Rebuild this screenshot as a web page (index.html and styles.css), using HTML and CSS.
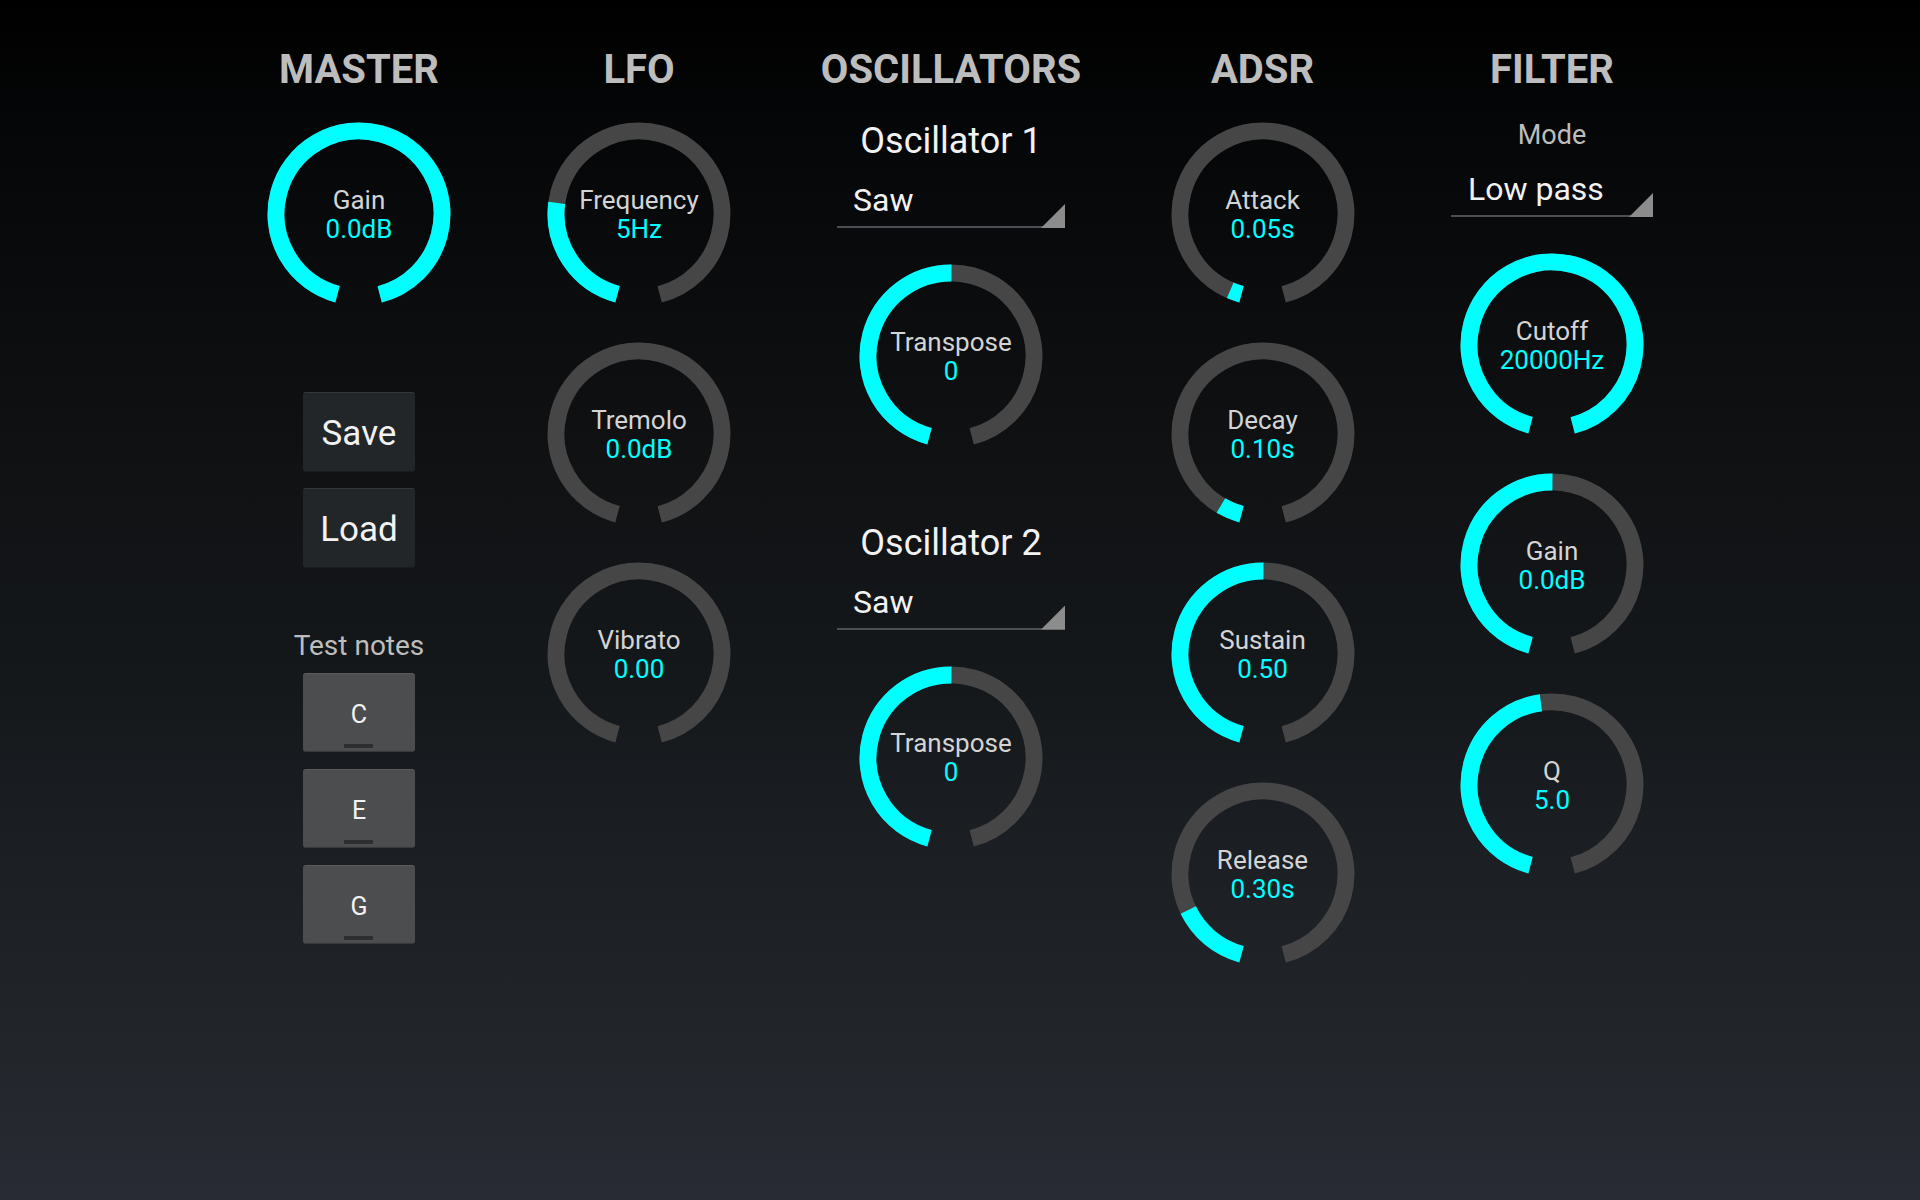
FILE: index.html
```html
<!DOCTYPE html>
<html lang="en">
<head>
<meta charset="utf-8">
<title>Synth</title>
<link rel="stylesheet" href="styles.css">
</head>
<body>
<main class="synth">
  <section class="col">
    <h2 class="title">MASTER</h2>
    <div class="knob first">
      <svg class="dial" viewBox="0 0 184 184" width="184" height="184"><circle class="track" cx="92" cy="92" r="83"/><circle class="level" cx="92" cy="92" r="83" stroke-dasharray="478.04 1000"/></svg>
      <div class="knob-text"><span class="knob-label">Gain</span><span class="knob-value">0.0dB</span></div>
    </div>
    <div class="btn-group">
      <button class="btn">Save</button>
      <button class="btn">Load</button>
    </div>
    <div class="notes-label">Test notes</div>
    <div class="notes">
      <button class="note">C</button>
      <button class="note">E</button>
      <button class="note">G</button>
    </div>
  </section>

  <section class="col">
    <h2 class="title">LFO</h2>
    <div class="knob first">
      <svg class="dial" viewBox="0 0 184 184" width="184" height="184"><circle class="track" cx="92" cy="92" r="83"/><circle class="level" cx="92" cy="92" r="83" stroke-dasharray="119.5 1000"/></svg>
      <div class="knob-text"><span class="knob-label">Frequency</span><span class="knob-value">5Hz</span></div>
    </div>
    <div class="knob">
      <svg class="dial" viewBox="0 0 184 184" width="184" height="184"><circle class="track" cx="92" cy="92" r="83"/></svg>
      <div class="knob-text"><span class="knob-label">Tremolo</span><span class="knob-value">0.0dB</span></div>
    </div>
    <div class="knob">
      <svg class="dial" viewBox="0 0 184 184" width="184" height="184"><circle class="track" cx="92" cy="92" r="83"/></svg>
      <div class="knob-text"><span class="knob-label">Vibrato</span><span class="knob-value">0.00</span></div>
    </div>
  </section>

  <section class="col">
    <h2 class="title">OSCILLATORS</h2>
    <div class="osc">
      <div class="osc-name">Oscillator 1</div>
      <div class="select osc-select">Saw</div>
      <div class="knob">
        <svg class="dial" viewBox="0 0 184 184" width="184" height="184"><circle class="track" cx="92" cy="92" r="83"/><circle class="level" cx="92" cy="92" r="83" stroke-dasharray="239.02 1000"/></svg>
        <div class="knob-text"><span class="knob-label">Transpose</span><span class="knob-value">0</span></div>
      </div>
    </div>
    <div class="osc osc-second">
      <div class="osc-name">Oscillator 2</div>
      <div class="select osc-select">Saw</div>
      <div class="knob">
        <svg class="dial" viewBox="0 0 184 184" width="184" height="184"><circle class="track" cx="92" cy="92" r="83"/><circle class="level" cx="92" cy="92" r="83" stroke-dasharray="239.02 1000"/></svg>
        <div class="knob-text"><span class="knob-label">Transpose</span><span class="knob-value">0</span></div>
      </div>
    </div>
  </section>

  <section class="col">
    <h2 class="title">ADSR</h2>
    <div class="knob first">
      <svg class="dial" viewBox="0 0 184 184" width="184" height="184"><circle class="track" cx="92" cy="92" r="83"/><circle class="level" cx="92" cy="92" r="83" stroke-dasharray="12 1000"/></svg>
      <div class="knob-text"><span class="knob-label">Attack</span><span class="knob-value">0.05s</span></div>
    </div>
    <div class="knob">
      <svg class="dial" viewBox="0 0 184 184" width="184" height="184"><circle class="track" cx="92" cy="92" r="83"/><circle class="level" cx="92" cy="92" r="83" stroke-dasharray="22.5 1000"/></svg>
      <div class="knob-text"><span class="knob-label">Decay</span><span class="knob-value">0.10s</span></div>
    </div>
    <div class="knob">
      <svg class="dial" viewBox="0 0 184 184" width="184" height="184"><circle class="track" cx="92" cy="92" r="83"/><circle class="level" cx="92" cy="92" r="83" stroke-dasharray="239.02 1000"/></svg>
      <div class="knob-text"><span class="knob-label">Sustain</span><span class="knob-value">0.50</span></div>
    </div>
    <div class="knob">
      <svg class="dial" viewBox="0 0 184 184" width="184" height="184"><circle class="track" cx="92" cy="92" r="83"/><circle class="level" cx="92" cy="92" r="83" stroke-dasharray="71.2 1000"/></svg>
      <div class="knob-text"><span class="knob-label">Release</span><span class="knob-value">0.30s</span></div>
    </div>
  </section>

  <section class="col">
    <h2 class="title">FILTER</h2>
    <div class="mode-label">Mode</div>
    <div class="select filter-select">Low pass</div>
    <div class="knob">
      <svg class="dial" viewBox="0 0 184 184" width="184" height="184"><circle class="track" cx="92" cy="92" r="83"/><circle class="level" cx="92" cy="92" r="83" stroke-dasharray="478.04 1000"/></svg>
      <div class="knob-text"><span class="knob-label">Cutoff</span><span class="knob-value">20000Hz</span></div>
    </div>
    <div class="knob">
      <svg class="dial" viewBox="0 0 184 184" width="184" height="184"><circle class="track" cx="92" cy="92" r="83"/><circle class="level" cx="92" cy="92" r="83" stroke-dasharray="239.02 1000"/></svg>
      <div class="knob-text"><span class="knob-label">Gain</span><span class="knob-value">0.0dB</span></div>
    </div>
    <div class="knob">
      <svg class="dial" viewBox="0 0 184 184" width="184" height="184"><circle class="track" cx="92" cy="92" r="83"/><circle class="level" cx="92" cy="92" r="83" stroke-dasharray="227.5 1000"/></svg>
      <div class="knob-text"><span class="knob-label">Q</span><span class="knob-value">5.0</span></div>
    </div>
  </section>
</main>
</body>
</html>
```
FILE: styles.css
```css
html, body {
  margin: 0;
  padding: 0;
}

body {
  width: 1920px;
  height: 1200px;
  overflow: hidden;
  font-family: Roboto, "Noto Sans", "Liberation Sans", sans-serif;
  background: linear-gradient(180deg,
    #000000 0%,
    #050607 10%,
    #090a0c 20%,
    #101214 40%,
    #15181b 57%,
    #1b1e22 70%,
    #202327 83%,
    #24272d 92%,
    #282b34 100%);
}

.synth {
  display: grid;
  grid-template-columns: 280px 280px 344px 279px 300px;
  align-items: start;
  padding: 47px 0 0 219px;
}

.col {
  display: flex;
  flex-direction: column;
  align-items: center;
}

.title {
  margin: 0;
  font-size: 40px;
  line-height: 46px;
  font-weight: 700;
  color: #bdbdbd;
  letter-spacing: 0;
}

/* Knobs */
.knob {
  display: grid;
  place-items: center;
  width: 184px;
  height: 184px;
  margin-top: 36px;
}

.knob.first {
  margin-top: 29px;
}

.knob > * {
  grid-area: 1 / 1;
}

.dial {
  display: block;
}

.track,
.level {
  fill: none;
  stroke-width: 17;
  transform: rotate(105deg);
  transform-origin: 92px 92px;
}

.track {
  stroke: #464646;
  stroke-dasharray: 478.04 1000;
}

.level {
  stroke: #00ffff;
}

.knob-text {
  display: flex;
  flex-direction: column;
  align-items: center;
  padding-top: 1px;
  font-size: 26px;
  line-height: 29px;
}

.knob-label {
  color: #d4d4d4;
}

.knob-value {
  color: #00ffff;
}

/* Master buttons */
.btn-group {
  display: flex;
  flex-direction: column;
  gap: 16px;
  margin-top: 86px;
}

.btn {
  width: 112px;
  height: 80px;
  padding: 3px 0 0;
  border: 0;
  border-top: 1px solid #34383c;
  border-bottom: 1px solid #1a1c1f;
  border-radius: 3px;
  background: #232629;
  color: #f2f2f2;
  font-family: Roboto, "Noto Sans", sans-serif;
  font-size: 35px;
  line-height: 75px;
}

.notes-label {
  margin-top: 62px;
  font-size: 28px;
  line-height: 32px;
  color: #bdbdbd;
}

.notes {
  display: flex;
  flex-direction: column;
  gap: 17px;
  margin-top: 11px;
}

.note {
  position: relative;
  width: 112px;
  height: 79px;
  padding: 4px 0 0;
  border: 0;
  border-top: 1px solid #5a5b5d;
  border-bottom: 1px solid #38393b;
  border-radius: 3px;
  background: #4c4d4f;
  color: #f2f2f2;
  font-family: Roboto, "Noto Sans", sans-serif;
  font-size: 25px;
  line-height: 28px;
}

.note::after {
  content: "";
  position: absolute;
  left: 41px;
  bottom: 3px;
  width: 29px;
  height: 4px;
  background: #2d2e30;
}

/* Oscillators */
.osc {
  display: flex;
  flex-direction: column;
  align-items: center;
  margin-top: 27px;
}

.osc-second {
  margin-top: 73.5px;
}

.osc-name {
  font-size: 36px;
  line-height: 42px;
  color: #f2f2f2;
}

.select {
  position: relative;
  box-sizing: border-box;
  padding: 0 0 7px 16px;
  border-bottom: 2px solid #4b4f53;
  font-size: 32px;
  line-height: 38px;
  color: #f2f2f2;
}

.select::after {
  content: "";
  position: absolute;
  right: 0;
  bottom: -2px;
  width: 24px;
  height: 24px;
  background: #8c8c8c;
  clip-path: polygon(100% 0, 100% 100%, 0 100%);
}

.osc-select {
  width: 228px;
  margin-top: 19px;
}

/* Filter */
.mode-label {
  margin-top: 26px;
  font-size: 27px;
  line-height: 32px;
  color: #bdbdbd;
}

.filter-select {
  width: 202px;
  margin-top: 19px;
  padding-left: 17px;
}
```
